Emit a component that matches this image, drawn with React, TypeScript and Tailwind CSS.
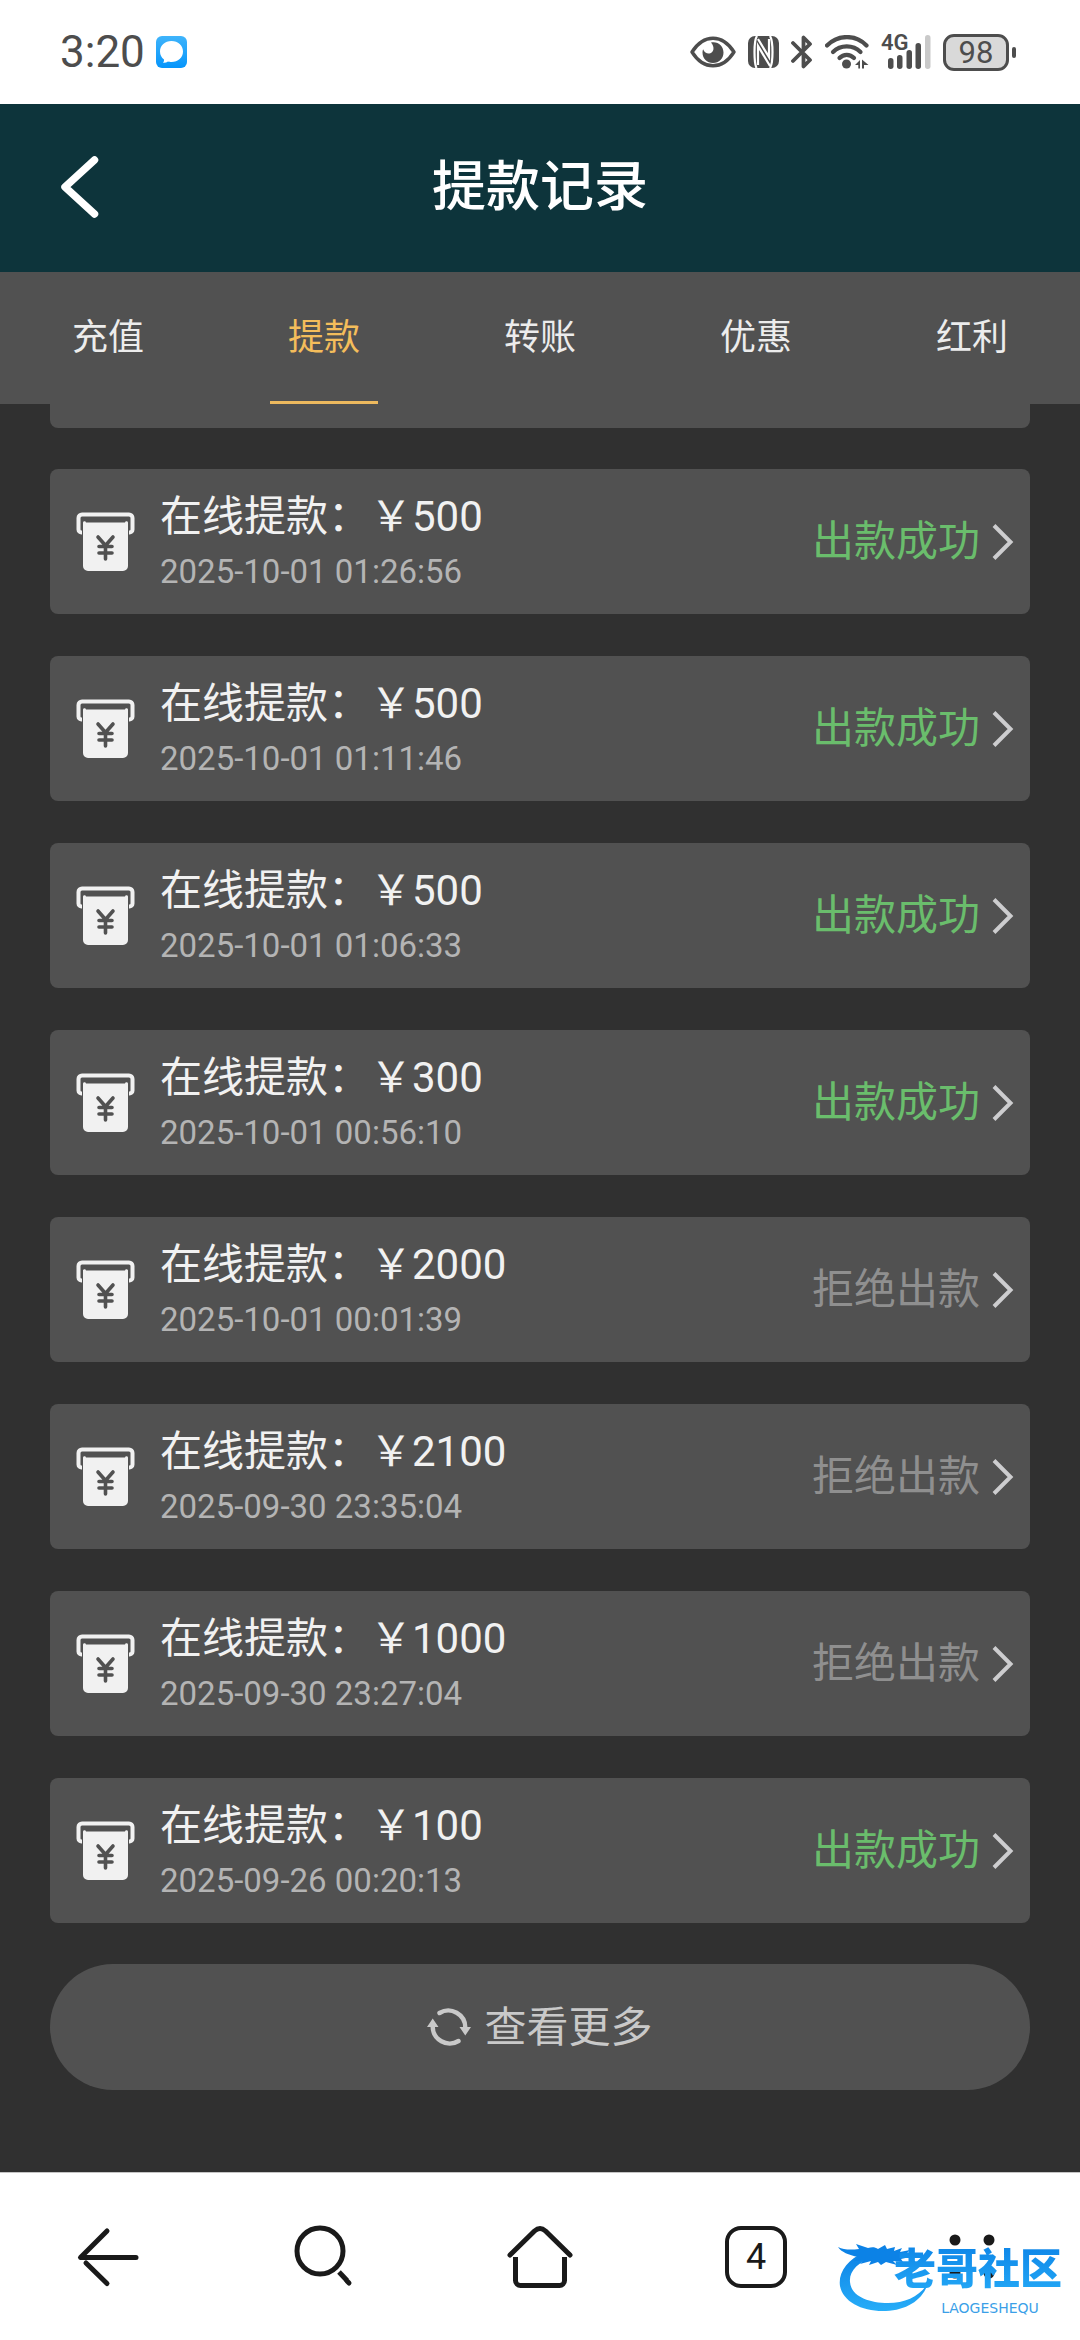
import React from "react";

type Status = "success" | "rejected";

interface WithdrawalRecord {
  amount: number;
  time: string;
  status: Status;
}

const records: WithdrawalRecord[] = [
  { amount: 500, time: "2025-10-01 01:26:56", status: "success" },
  { amount: 500, time: "2025-10-01 01:11:46", status: "success" },
  { amount: 500, time: "2025-10-01 01:06:33", status: "success" },
  { amount: 300, time: "2025-10-01 00:56:10", status: "success" },
  { amount: 2000, time: "2025-10-01 00:01:39", status: "rejected" },
  { amount: 2100, time: "2025-09-30 23:35:04", status: "rejected" },
  { amount: 1000, time: "2025-09-30 23:27:04", status: "rejected" },
  { amount: 100, time: "2025-09-26 00:20:13", status: "success" },
];

const tabs = ["充值", "提款", "转账", "优惠", "红利"];
const activeTab = "提款";

function MessageIcon() {
  return (
    <svg width="31" height="32" viewBox="0 0 31 32" aria-hidden="true">
      <defs>
        <linearGradient id="msg" x1="0" y1="0" x2="0" y2="1">
          <stop offset="0" stopColor="#3fb4fb" />
          <stop offset="1" stopColor="#0695fb" />
        </linearGradient>
      </defs>
      <rect width="31" height="32" rx="6" fill="url(#msg)" />
      <path
        d="M15.500 5C22 5 27 9.500 27 15.500S22 26 15.500 26c-1.500 0-2.500 0-3.500-.4-1.500 1-3 1.400-5 1.200.8-1 1.200-2 1-3.200C5.500 21.500 4 19 4 15.500 4 9.500 9 5 15.500 5Z"
        fill="#fff"
      />
    </svg>
  );
}

function EyeIcon() {
  return (
    <svg width="46" height="32" viewBox="0 0 46 32" aria-hidden="true">
      <path
        d="M2 16C8 6.500 15 2.200 23 2.200S38 6.500 44 16C38 25.500 31 29.800 23 29.800S8 25.500 2 16Z"
        fill="none"
        stroke="#4d4d4d"
        strokeWidth="3.400"
        strokeLinejoin="round"
      />
      <path
        d="M21 6.500c7-1.500 12.500 3.500 12.500 10 0 6-4.500 10.500-10.500 10.500S12.500 22.500 12.500 16.500c0-1.200.2-2.300.6-3.300C14.500 16.500 17 18 19.500 17.500c4.500-.8 5.500-6.500 1.500-11Z"
        fill="#4d4d4d"
      />
    </svg>
  );
}

function NfcIcon() {
  return (
    <svg width="31" height="32" viewBox="0 0 31 32" aria-hidden="true">
      <rect width="31" height="32" rx="7" fill="#4d4d4d" />
      <g fill="none" stroke="#fff" strokeWidth="2.200">
        <path d="M9 0C7 3 6.500 8 6.500 16S7 29 8.500 32" />
        <path d="M22 0c1.800 3 2.500 8 2.500 16S24 29 22 32" />
        <path d="M10 29V10l12 20" />
        <path d="M10 3l11 18V3" />
      </g>
    </svg>
  );
}

function BluetoothIcon() {
  return (
    <svg width="22" height="34" viewBox="0 0 22 34" aria-hidden="true">
      <path
        d="M2 8l17 17-6.500 6.500V20M2 26L19 9l-6.500-6.500V14"
        fill="none"
        stroke="#4d4d4d"
        strokeWidth="3.800"
        strokeLinecap="round"
        strokeLinejoin="round"
      />
    </svg>
  );
}

function WifiIcon() {
  return (
    <svg width="44" height="34" viewBox="0 0 44 34" aria-hidden="true">
      <g fill="none" stroke="#4d4d4d" strokeWidth="4.200" strokeLinecap="round">
        <path d="M2 10.500C13-.8 31-.8 41.500 10.500" />
        <path d="M8 17C15.500 9.500 28 9.500 35.500 17" />
        <path d="M14.500 23c4-4.300 10.500-4.300 14.500 0" />
      </g>
      <circle cx="21.500" cy="29" r="4.500" fill="#4d4d4d" />
      <path d="M30 30l5-5V33.500h-1.700V30ZM37 24.500l6.500 5.500h-4.500V33.500h-2Z" fill="#4d4d4d" />
    </svg>
  );
}

function SignalIcon() {
  return (
    <span className="relative block h-[34px] w-[50px]">
      <span className="absolute -top-1 left-0 text-[22px] leading-6 font-semibold">4G</span>
      <svg width="50" height="34" viewBox="0 0 50 34" aria-hidden="true">
        <g fill="#4d4d4d">
          <rect x="7" y="23" width="5.500" height="11" rx="2.700" />
          <rect x="16" y="20" width="5.500" height="14" rx="2.700" />
          <rect x="25.500" y="15" width="5.500" height="19" rx="2.700" />
          <rect x="34.500" y="8" width="5.500" height="26" rx="2.700" />
        </g>
        <rect x="44" y="0" width="5.500" height="34" rx="2.700" fill="#c9c9c9" />
      </svg>
    </span>
  );
}

function Battery() {
  return (
    <span className="flex items-center gap-[3px]">
      <span className="flex h-[37px] w-[66px] items-center justify-center rounded-[11px] border-[3px] border-[#4d4d4d] bg-[#d9d9d9] text-[31px] leading-none">
        98
      </span>
      <span className="h-[11px] w-1 rounded-sm bg-[#4d4d4d]" />
    </span>
  );
}

function StatusBar() {
  return (
    <div className="flex h-[104px] items-center justify-between bg-white pr-16 pl-[60px] text-[#4d4d4d]">
      <div className="flex items-center gap-[11px]">
        <time className="text-[44px] leading-none">3:20</time>
        <MessageIcon />
      </div>
      <div className="flex items-center gap-3">
        <EyeIcon />
        <NfcIcon />
        <BluetoothIcon />
        <WifiIcon />
        <SignalIcon />
        <Battery />
      </div>
    </div>
  );
}

function Header() {
  return (
    <header className="grid h-[168px] grid-cols-[1fr_auto_1fr] items-center bg-[#0d343b] px-[60px] text-white">
      <button type="button" aria-label="返回" className="justify-self-start">
        <svg width="40" height="64" viewBox="0 0 40 64" aria-hidden="true">
          <path
            d="M34.500 4L5 31l29.500 27"
            fill="none"
            stroke="currentColor"
            strokeWidth="7.500"
            strokeLinecap="round"
            strokeLinejoin="round"
          />
        </svg>
      </button>
      <h1 className="text-[54px] leading-none font-medium">提款记录</h1>
    </header>
  );
}

function Tabs() {
  return (
    <nav className="grid h-[132px] grid-cols-5 bg-[#515151]">
      {tabs.map((tab) => (
        <button
          key={tab}
          type="button"
          aria-current={tab === activeTab ? "page" : undefined}
          className={
            tab === activeTab
              ? "mx-[54px] border-b-[3px] border-[#edb95e] pt-[3px] text-4xl text-[#f4bd5b]"
              : "mx-[54px] border-b-[3px] border-transparent pt-[3px] text-4xl text-[#ececec]"
          }
        >
          {tab}
        </button>
      ))}
    </nav>
  );
}

function WithdrawIcon() {
  return (
    <svg width="60" height="60" viewBox="0 0 60 60" className="shrink-0" aria-hidden="true">
      <path
        d="M6 20.500H5.500a3 3 0 0 1-3-3V6a3.500 3.500 0 0 1 3.500-3.500h47A3.500 3.500 0 0 1 56.500 6v11.500a3 3 0 0 1-3 3H53"
        fill="none"
        stroke="#f1f1f1"
        strokeWidth="4"
      />
      <path d="M7 11a1.500 1.500 0 0 1 3-.5h39a1.500 1.500 0 0 1 3 .5V54a5 5 0 0 1-5 5H12a5 5 0 0 1-5-5Z" fill="#f1f1f1" />
      <path
        d="M22 25l7.500 8.500L37 25M23 34.500h13M23 41h13M29.500 34v13"
        fill="none"
        stroke="#515151"
        strokeWidth="3.600"
        strokeLinecap="round"
        strokeLinejoin="round"
      />
    </svg>
  );
}

function RecordCard({ record }: { record: WithdrawalRecord }) {
  const success = record.status === "success";
  return (
    <li>
      <a
        href="#detail"
        className="flex h-[145px] items-center rounded-lg bg-[#515151] pr-4 pl-[26px]"
      >
        <WithdrawIcon />
        <div className="ml-6 flex-1 pt-1">
          <div className="text-[42px] leading-[56px] text-[#f1f1f1]">在线提款：￥{record.amount}</div>
          <time className="block text-[33px] leading-[54px] text-[#b4b4b4]">{record.time}</time>
        </div>
        <span
          className={
            success
              ? "text-[42px] leading-[56px] text-[#6abd6c]"
              : "text-[42px] leading-[56px] text-[#8f8f8f]"
          }
        >
          {success ? "出款成功" : "拒绝出款"}
        </span>
        <svg width="22" height="36" viewBox="0 0 22 36" className="ml-3 shrink-0" aria-hidden="true">
          <path d="M2 1.500L18.500 18 2 34.500" fill="none" stroke="#cdcdcf" strokeWidth="4" />
        </svg>
      </a>
    </li>
  );
}

function RefreshIcon() {
  return (
    <svg width="44" height="38" viewBox="0 0 44 38" aria-hidden="true">
      <g fill="none" stroke="currentColor" strokeWidth="4.400" strokeLinecap="round">
        <path d="M12.500 5A17 17 0 0 1 38.300 19.500" />
        <path d="M31.500 33A17 17 0 0 1 5.700 18.500" />
      </g>
      <path d="M32.500 19H44l-5.700 8.500ZM0 19h11.500L5.700 10.500Z" fill="currentColor" />
    </svg>
  );
}

function DragonMark() {
  return (
    <svg width="92" height="74" viewBox="0 0 92 74" aria-hidden="true">
      <defs>
        <linearGradient id="dragon" x1="0" y1="0" x2="0" y2="1">
          <stop offset="0" stopColor="#0c82e6" />
          <stop offset="1" stopColor="#27adf8" />
        </linearGradient>
      </defs>
      <path
        d="M26 10C9 18 0 31 2 44c3 16 23 26 46 25 21-1 37-11 42-28-8 13-22 20-40 20C30 61 13 54 12 40 11 29 20 20 36 15Z"
        fill="url(#dragon)"
      />
      <path
        d="M0 5c6 3 13 3 21 2l-3-5 12 4c4-1 7-1 10 1l7-4 2 4 8-2-1 4 8-3-2 4 10-2-5 5 5 2-9 2 2 3-10-1 4 4-11-3-5 3-3-3-9 3 2-4-11 3 4-4-10 1 4-4C11 13 3 10 0 5Z"
        fill="#0c82e6"
      />
    </svg>
  );
}

function BottomBar() {
  return (
    <footer className="relative border-t border-[#c4c4c4] bg-white text-[#1a1a1a]">
      <nav className="grid h-[167px] grid-cols-5 place-items-center">
        <button type="button" aria-label="后退">
          <svg width="64" height="64" viewBox="0 0 64 64" aria-hidden="true">
            <g fill="none" stroke="currentColor" strokeWidth="5" strokeLinecap="round" strokeLinejoin="round">
              <path d="M31 6L4.500 32.500H60" />
              <path d="M31 58.500L10 38" />
            </g>
          </svg>
        </button>
        <button type="button" aria-label="搜索">
          <svg width="64" height="64" viewBox="0 0 64 64" aria-hidden="true">
            <g fill="none" stroke="currentColor" strokeWidth="5">
              <circle cx="28" cy="26" r="23" />
              <path d="M47 47l8 8.500" />
              <path d="M55 56l2 2" strokeLinecap="round" />
            </g>
          </svg>
        </button>
        <button type="button" aria-label="主页">
          <svg width="66" height="64" viewBox="0 0 66 64" aria-hidden="true">
            <g fill="none" stroke="currentColor" strokeWidth="5" strokeLinejoin="round">
              <path d="M3 30L27.500 6q5.500-5 11 0L63 30" strokeLinecap="round" />
              <path d="M8.500 32v23.500a5 5 0 0 0 5 5h39a5 5 0 0 0 5-5V32" />
            </g>
          </svg>
        </button>
        <button
          type="button"
          aria-label="标签页"
          className="flex size-[62px] items-center justify-center rounded-2xl border-4 border-current text-4xl"
        >
          4
        </button>
        <button type="button" aria-label="菜单">
          <svg width="46" height="46" viewBox="0 0 46 46" fill="currentColor" aria-hidden="true">
            <circle cx="6" cy="6" r="5.500" />
            <circle cx="40" cy="6" r="5.500" />
            <circle cx="6" cy="39" r="5.500" />
            <circle cx="40" cy="39" r="5.500" />
          </svg>
        </button>
      </nav>
      <div className="pointer-events-none absolute right-[18px] bottom-6 h-[74px] w-[224px]">
        <DragonMark />
        <div className="absolute right-0 bottom-0 flex flex-col items-center">
          <span className="bg-linear-to-b from-[#0c82e6] to-[#27adf8] bg-clip-text text-[42px] leading-[60px] font-black text-transparent">
            老哥社区
          </span>
          <span className="pl-6 font-['DejaVu_Sans'] text-sm leading-4 text-[#3b9fe8]">LAOGESHEQU</span>
        </div>
      </div>
    </footer>
  );
}

export default function App() {
  return (
    <div className="flex min-h-screen flex-col bg-[#303030] font-[Roboto,'Noto_Sans_CJK_SC',sans-serif]">
      <StatusBar />
      <Header />
      <Tabs />
      <main className="flex flex-1 flex-col px-[50px]">
        <div className="h-6 rounded-b-lg bg-[#515151]" />
        <ul className="mt-[41px] flex flex-col gap-[42px]">
          {records.map((record) => (
            <RecordCard key={record.time} record={record} />
          ))}
        </ul>
        <button
          type="button"
          className="mt-[41px] flex h-[126px] items-center justify-center gap-[13px] rounded-full bg-[#515151] text-[42px] text-[#c9c9c9]"
        >
          <RefreshIcon />
          查看更多
        </button>
      </main>
      <BottomBar />
    </div>
  );
}
